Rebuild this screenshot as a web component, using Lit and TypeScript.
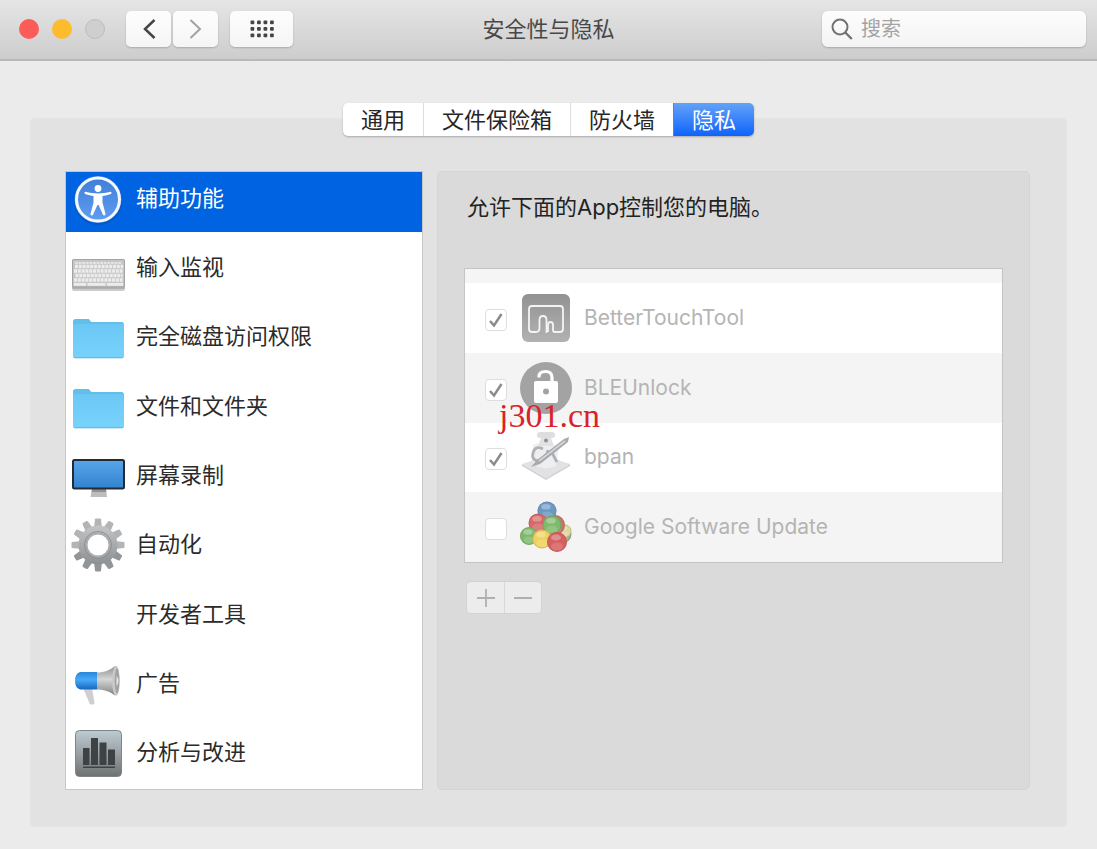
import { LitElement, html, css, svg, nothing } from "lit";
import type { TemplateResult } from "lit";
import { customElement, property, state } from "lit/decorators.js";
import { classMap } from "lit/directives/class-map.js";

const accessibilityIcon = html`<svg class="glyph" viewBox="0 0 56 56" aria-hidden="true">
  <defs>
    <linearGradient id="acc" x1="0" y1="0" x2="0" y2="1">
      <stop offset="0" stop-color="#3f7fd8" /><stop offset="1" stop-color="#5f9df0" />
    </linearGradient>
  </defs>
  <circle cx="28" cy="31" r="24" fill="#0b46a8" opacity=".45" />
  <circle cx="28" cy="29.500" r="23.500" fill="#4c8ae2" />
  <circle cx="28" cy="29.500" r="21.500" fill="url(#acc)" stroke="#f4f8ff" stroke-width="3" />
  <circle cx="28" cy="18.500" r="3.400" fill="#fff" />
  <path d="M15.500 21.800c4 1.300 8 1.700 12.500 1.700s8.500-.4 12.500-1.700c1-.2 1.600 1.600.4 2.100-2.700 1.100-5.600 1.800-8.400 2.200v6.500l3 11.500c.2 1.400-1.900 2-2.500.6L28.600 35h-1.200l-4.400 9.700c-.6 1.400-2.700.8-2.500-.6l3-11.500v-6.500c-2.800-.4-5.700-1.100-8.400-2.200-1.200-.5-.6-2.300.4-2.100z" fill="#fff" />
</svg>`;

const keyboardIcon = html`<svg class="glyph" viewBox="0 0 56 56" aria-hidden="true">
  <rect x="2" y="22" width="53" height="30" rx="2" fill="#9a9a9a" opacity=".5" />
  <rect x="2" y="20" width="53" height="30" rx="2" fill="#b0b0b0" />
  <rect x="2.500" y="20.500" width="52" height="27.500" rx="1.500" fill="#c6c6c6" stroke="#a3a3a3" />
  <g fill="none" stroke="#ececec" stroke-width="3.400" stroke-dasharray="3 .8">
    <path d="M5 27.500h48" /><path d="M4 32h49" /><path d="M5.500 36.500h47" /><path d="M4 41h49" />
  </g>
  <path d="M5 24h47" stroke="#e4e4e4" stroke-width="2" stroke-dasharray="2.800 .8" />
  <path d="M4 45.300h12M17.500 45.300h18M37 45.300h16" stroke="#ececec" stroke-width="2.800" />
</svg>`;

const folderIcon = html`<svg class="glyph" viewBox="0 0 56 56" aria-hidden="true">
  <defs>
    <linearGradient id="fold" x1="0" y1="0" x2="0" y2="1">
      <stop offset="0" stop-color="#6cc7f5" /><stop offset="1" stop-color="#77d3fb" />
    </linearGradient>
  </defs>
  <path d="M3 13.500c0-1.500 1-2.500 2.500-2.500h12c1.500 0 2 .5 2.800 1.700.6 1 1.200 1.300 2.500 1.300h28.700c1.500 0 2.500 1 2.500 2.500V30H3z" fill="#62bfe9" />
  <rect x="3" y="16" width="51" height="34" rx="2" fill="url(#fold)" />
  <path d="M3.500 48.800q.5 1 1.800 1h46.400q1.300 0 1.800-1" stroke="#5bb3dc" fill="none" />
</svg>`;

const monitorIcon = html`<svg class="glyph" viewBox="0 0 56 56" aria-hidden="true">
  <defs>
    <linearGradient id="scr" x1="0" y1="0" x2="0" y2="1">
      <stop offset="0" stop-color="#57a6ea" /><stop offset="1" stop-color="#3382cf" />
    </linearGradient>
  </defs>
  <path d="M22 42h14l1 8H20.500z" fill="#bdbdbd" /><path d="M22 42h14l.3 3H21.600z" fill="#929292" />
  <rect x="3" y="13" width="51" height="28.500" rx="1.500" fill="url(#scr)" stroke="#232c36" stroke-width="2" />
</svg>`;

const gearIcon = html`<svg class="glyph" viewBox="0 0 56 56" aria-hidden="true">
  <defs>
    <linearGradient id="gear" x1="0" y1="0" x2="0" y2="1">
      <stop offset="0" stop-color="#c3c5c7" /><stop offset="1" stop-color="#8d9092" />
    </linearGradient>
    <mask id="gearcut"><rect width="56" height="56" fill="#fff" /><circle cx="28" cy="29" r="10.500" fill="#000" /></mask>
  </defs>
  <g mask="url(#gearcut)">
    <g>
      ${Array.from({ length: 12 }, (_, i) => svg`<path d="M24 12l1-8.700q.2-.8 1-.8h4q.8 0 1 .8l1 8.700z" fill=${i > 3 && i < 9 ? "#929597" : "#b2b4b6"} transform="rotate(${i * 30} 28 29)" />`)}
    </g>
    <circle cx="28" cy="29" r="19.500" fill="url(#gear)" />
    <circle cx="28" cy="29" r="13.500" fill="none" stroke="#8d9092" stroke-width="1" />
    <circle cx="28" cy="29" r="11.500" fill="none" stroke="#a9acae" stroke-width="2" />
  </g>
</svg>`;

const megaphoneIcon = html`<svg class="glyph" viewBox="0 0 56 56" aria-hidden="true">
  <defs>
    <linearGradient id="mb" x1="0" y1="0" x2="0" y2="1">
      <stop offset="0" stop-color="#2b86da" /><stop offset=".45" stop-color="#46aaf8" /><stop offset="1" stop-color="#1567bd" />
    </linearGradient>
    <linearGradient id="mg" x1="0" y1="0" x2="0" y2="1">
      <stop offset="0" stop-color="#8d8d8d" /><stop offset=".45" stop-color="#d6d6d6" /><stop offset="1" stop-color="#808080" />
    </linearGradient>
  </defs>
  <path d="M13 33h9l2.500 14.500c.1 1.200-.6 2-1.800 2h-1.500c-1 0-1.500-.5-1.800-1.500z" fill="#cfcfd1" />
  <path d="M10 17h17v17.500H10q-5-1.500-5-8.700t5-8.800z" fill="url(#mb)" />
  <path d="M27 17.500c8 0 13-2.500 18-6.500v29.500c-5-3.500-10-6-18-6z" fill="url(#mg)" />
  <ellipse cx="46" cy="25.800" rx="3.800" ry="15" fill="#c9c9c9" />
  <ellipse cx="47" cy="25.800" rx="2.300" ry="12.500" fill="#a3a3a3" />
  <path d="M46.500 31q4-5 0-10z" fill="#e6e6e6" />
</svg>`;

const analyticsIcon = html`<svg class="glyph" viewBox="0 0 56 56" aria-hidden="true">
  <defs>
    <linearGradient id="ana" x1="0" y1="0" x2="0" y2="1">
      <stop offset="0" stop-color="#bccbd2" /><stop offset=".5" stop-color="#9aa0a3" /><stop offset="1" stop-color="#6f7171" />
    </linearGradient>
  </defs>
  <rect x="5.500" y="6.500" width="46" height="46" rx="4" fill="url(#ana)" stroke="#7e8588" />
  <g fill="#3d4245">
    <rect x="13" y="24" width="6.500" height="17" /><rect x="21" y="14" width="7" height="27" />
    <rect x="29.500" y="18.500" width="7" height="22.500" /><rect x="38" y="25.500" width="7" height="15.500" />
    <rect x="13" y="42.500" width="32" height="1.500" />
  </g>
</svg>`;

const betterTouchToolIcon = html`<svg class="glyph" viewBox="0 0 54 54" aria-hidden="true">
  <defs>
    <linearGradient id="btt" x1="0" y1="0" x2="0" y2="1">
      <stop offset="0" stop-color="#929292" /><stop offset="1" stop-color="#b2b2b2" />
    </linearGradient>
  </defs>
  <rect x="3" y="3" width="48" height="48" rx="6" fill="url(#btt)" />
  <path d="M13 41q-3 0-3-3V18q0-3 3-3h28q3 0 3 3v20q0 3-3 3h-5q-2 0-2-2v-5q0-3-2.500-3T29 34v7" fill="none" stroke="#f4f4f4" stroke-width="1.800" />
  <path d="M13 41h4q3.500 0 3.500-4v-8q0-4 3.500-4t3.500 4v13" fill="none" stroke="#f4f4f4" stroke-width="1.800" />
</svg>`;

const unlockIcon = html`<svg class="glyph" viewBox="0 0 54 54" aria-hidden="true">
  <circle cx="27" cy="27" r="26" fill="#a3a3a3" />
  <path d="M20 16.500v-1q0-5 6.500-5t6.500 6V22" fill="none" stroke="#fff" stroke-width="3.200" />
  <rect x="15" y="20" width="24" height="22" rx="2" fill="#fff" />
  <circle cx="27" cy="30.500" r="3" fill="#a3a3a3" />
</svg>`;

const scriptIcon = html`<svg class="glyph" viewBox="0 0 54 54" aria-hidden="true">
  <path d="M3 34l24-8 24 8-24 14z" fill="#e2e2e4" /><path d="M3 34l24 14 24-14v2L27 50 3 36z" fill="#d2d2d5" />
  <path d="M14 15q12-5 26 2l-3 19q-12 5-23-1z" fill="#eeeef0" />
  <rect x="18" y="2" width="18" height="6" rx="3" fill="#dededf" />
  <path d="M22 8h10l3 8H19z" fill="#e2e2e5" /><circle cx="27" cy="10.500" r="2" fill="#8f9095" />
  <path d="M24 19q-8-4-10 4t7 8q6-1 8-11M32 21l6 11" fill="none" stroke="#b0b1b5" stroke-width="2.800" />
  <path d="M12 37l6-7L45 9l5-2-1 5-28 22z" fill="#a9aaae" /><path d="M20 31L46 11" stroke="#dedfe3" stroke-width="1.500" />
</svg>`;

const ball = (cx: number, cy: number, r: number, fill: string) => svg`
  <circle cx=${cx} cy=${cy} r=${r} fill=${fill} />
  <circle cx=${cx} cy=${cy} r=${r - 0.5} fill="none" stroke="#333" stroke-opacity=".14" />
  <ellipse cx=${cx} cy=${cy + r * 0.45} rx=${r * 0.6} ry=${r * 0.4} fill="#fff" opacity=".15" />
  <ellipse cx=${cx - 1} cy=${cy - r * 0.45} rx=${r * 0.5} ry=${r * 0.3} fill="#fff" opacity=".3" />`;

const googleIcon = html`<svg class="glyph" viewBox="0 0 54 54" aria-hidden="true">
  ${ball(43, 34, 9.5, "#a3a98a")}${ball(46, 31, 6.5, "#dcd79c")}
  ${ball(36, 25, 10, "#c9736a")}
  ${ball(28, 11, 9.5, "#6d98c4")}
  ${ball(19, 23, 9.5, "#d76868")}${ball(33, 25, 9.5, "#7fb96c")}
  ${ball(10, 36, 9, "#7fb96c")}${ball(23, 39, 9.5, "#f0d15c")}${ball(38, 42, 10, "#d65f5f")}
</svg>`;

interface Category { label: string; icon: TemplateResult | null }
interface AppEntry { name: string; allowed: boolean; icon: TemplateResult }

const tabs = ["通用", "文件保险箱", "防火墙", "隐私"];

const categories: Category[] = [
  { label: "辅助功能", icon: accessibilityIcon },
  { label: "输入监视", icon: keyboardIcon },
  { label: "完全磁盘访问权限", icon: folderIcon },
  { label: "文件和文件夹", icon: folderIcon },
  { label: "屏幕录制", icon: monitorIcon },
  { label: "自动化", icon: gearIcon },
  { label: "开发者工具", icon: null },
  { label: "广告", icon: megaphoneIcon },
  { label: "分析与改进", icon: analyticsIcon },
];

const apps: AppEntry[] = [
  { name: "BetterTouchTool", allowed: true, icon: betterTouchToolIcon },
  { name: "BLEUnlock", allowed: true, icon: unlockIcon },
  { name: "bpan", allowed: true, icon: scriptIcon },
  { name: "Google Software Update", allowed: false, icon: googleIcon },
];

const base = css`
  *, *::before, *::after { box-sizing: border-box; }
  button, input { font: inherit; color: inherit; margin: 0; padding: 0; border: 0; background: none; outline: none; }
  ul { list-style: none; margin: 0; padding: 0; }
  svg { display: block; }
`;

@customElement("window-toolbar")
export class WindowToolbar extends LitElement {
  static styles = [base, css`
    :host { display: block; }
    .bar {
      display: grid; grid-template-columns: 1fr auto 1fr; align-items: center;
      height: 61px; padding: 0 11px 1px;
      background: linear-gradient(#e5e5e5, #cdcdcd);
      border-bottom: 2px solid #b9b9b9;
    }
    .left { display: flex; align-items: center; }
    .lights { display: flex; gap: 13px; margin: 0 21px 0 8px; }
    .light { width: 20px; height: 20px; border-radius: 50%; }
    .close { background: #fc5b57; }
    .minimise { background: #fdbc2e; }
    .zoom { background: #cfcfcf; border: 1px solid #bdbdbd; }
    .tool {
      display: grid; place-items: center; width: 45px; height: 36px;
      background: linear-gradient(#fdfdfd, #f5f5f5); border-radius: 5px;
      box-shadow: 0 1px 2px rgba(0, 0, 0, .2);
    }
    .back { margin-right: 2px; }
    .grid { width: 63px; margin-left: 12px; }
    .title { margin: 0; font-size: 22px; line-height: 32px; font-weight: 400; color: #484848; }
    .search {
      justify-self: end; display: flex; align-items: center; gap: 8px;
      width: 264px; height: 36px; padding: 0 9px;
      background: linear-gradient(#fdfdfd, #f3f3f3); border-radius: 6px;
      box-shadow: 0 1px 2px rgba(0, 0, 0, .2);
    }
    .field { flex: 1; min-width: 0; font-size: 20px; line-height: 28px; color: #333; }
    .field::placeholder { color: #a3a3a3; opacity: 1; }
  `];

  render() {
    return html`<header class="bar">
      <div class="left">
        <div class="lights">
          <button class="light close" aria-label="关闭"></button>
          <button class="light minimise" aria-label="最小化"></button>
          <button class="light zoom" aria-label="缩放" disabled></button>
        </div>
        <button class="tool back" aria-label="后退">
          <svg width="14" height="22" viewBox="0 0 14 22" fill="none" stroke="#454545" stroke-width="2.500"><path d="M12.500 2L3 11l9.500 9" /></svg>
        </button>
        <button class="tool" aria-label="前进" disabled>
          <svg width="14" height="22" viewBox="0 0 14 22" fill="none" stroke="#a2a2a2" stroke-width="2"><path d="M1.500 2L11 11l-9.500 9" /></svg>
        </button>
        <button class="tool grid" aria-label="显示全部">
          <svg width="26" height="20" viewBox="0 0 26 20" fill="#454545">
            ${[0, 1, 2].map((r) => [0, 1, 2, 3].map((c) => svg`<rect x=${1.5 + c * 6.5} y=${1.5 + r * 6.5} width="3.800" height="3.800" rx="1" />`))}
          </svg>
        </button>
      </div>
      <h1 class="title">安全性与隐私</h1>
      <label class="search">
        <svg width="22" height="22" viewBox="0 0 22 22" fill="none" stroke="#717171" stroke-width="2"><circle cx="9" cy="9" r="7.500" /><path d="M14.300 14.500l6.500 6.500" stroke-width="2.400" /></svg>
        <input class="field" type="text" placeholder="搜索" aria-label="搜索" />
      </label>
    </header>`;
  }
}

@customElement("category-list")
export class CategoryList extends LitElement {
  @property({ type: Number }) selected = 0;

  static styles = [base, css`
    :host { display: block; }
    .frame { overflow: hidden; padding-bottom: 2px; background: #fff; border: 1px solid #c6c6c6; }
    .list { display: grid; grid-auto-rows: 1fr; height: 624px; margin-top: -9px; }
    .item {
      display: grid; grid-template-columns: 56px 1fr; align-items: center; gap: 10px;
      width: 100%; height: 100%; padding-left: 4px;
      text-align: left; font-size: 22px; line-height: 32px; color: #2b2b2b;
    }
    .selected { background: #0063e1; color: #fff; }
    .glyph { width: 56px; height: 56px; }
    .name { grid-column: 2; }
  `];

  private pick(index: number) {
    this.selected = index;
  }

  render() {
    return html`<div class="frame"><ul class="list">
      ${categories.map((c, i) => html`<li>
        <button class=${classMap({ item: true, selected: i === this.selected })}
          aria-pressed=${i === this.selected} @click=${() => this.pick(i)}>
          ${c.icon ?? nothing}<span class="name">${c.label}</span>
        </button>
      </li>`)}
    </ul></div>`;
  }
}

@customElement("allowed-apps")
export class AllowedApps extends LitElement {
  static styles = [base, css`
    :host { display: block; }
    .caption { margin: 0 0 45px 3px; font-size: 22px; line-height: 32px; color: #232323; }
    .box { position: relative; padding-top: 14px; background: #f5f5f5; border: 1px solid #c4c4c4; }
    .list { display: grid; grid-auto-rows: 1fr; height: 279px; background: #fff; }
    .row {
      display: grid; grid-template-columns: 22px 54px 1fr; align-items: center;
      height: 100%; padding-left: 20px;
      font-size: 21px; line-height: 32px; color: #b4b4b4;
    }
    .even { background: #f4f4f4; }
    .check { display: grid; margin-top: 4px; }
    .check > * { grid-area: 1 / 1; }
    .tick {
      appearance: none; width: 22px; height: 22px;
      background: #fff; border: 1px solid #dedede; border-radius: 4px;
    }
    .mark { width: 22px; height: 22px; pointer-events: none; }
    .glyph { width: 54px; height: 54px; margin-left: 12px; }
    .name { padding-left: 23px; }
    .stamp {
      position: absolute; left: 34px; top: 127px;
      font-family: "Liberation Serif", serif; font-size: 34px; line-height: 40px; color: #d8232a;
    }
    .actions { display: inline-flex; margin: 19px 0 0 3px; border-radius: 4px; overflow: hidden; box-shadow: 0 0 0 1px #d2d2d2; }
    .action { display: grid; place-items: center; width: 37px; height: 31px; background: #ececec; }
    .action + .action { border-left: 1px solid #d8d8d8; }
  `];

  render() {
    return html`
      <p class="caption">允许下面的App控制您的电脑。</p>
      <div class="box">
        <ul class="list">
          ${apps.map((a, i) => html`<li><label class=${classMap({ row: true, even: i % 2 === 1 })}>
            <span class="check">
              <input class="tick" type="checkbox" .checked=${a.allowed} disabled />
              ${a.allowed ? html`<svg class="mark" viewBox="0 0 22 22" fill="none" stroke="#8b8b8b" stroke-width="2.500" aria-hidden="true"><path d="M5 12l4 4.500L16.500 5" /></svg>` : nothing}
            </span>
            ${a.icon}
            <span class="name">${a.name}</span>
          </label></li>`)}
        </ul>
        <span class="stamp">j301.cn</span>
      </div>
      <div class="actions">
        <button class="action" aria-label="添加" disabled>
          <svg width="20" height="20" viewBox="0 0 20 20" stroke="#b0b0b0" stroke-width="1.800"><path d="M10 1v18M1 10h18" /></svg>
        </button>
        <button class="action" aria-label="移除" disabled>
          <svg width="20" height="20" viewBox="0 0 20 20" stroke="#b0b0b0" stroke-width="1.800"><path d="M1 10h18" /></svg>
        </button>
      </div>`;
  }
}

@customElement("app-root")
export class AppRoot extends LitElement {
  @state() private tab = 3;

  static styles = [base, css`
    :host {
      display: flex; flex-direction: column; min-height: 100vh; background: #ebebeb;
      font-family: Inter, "Noto Sans CJK SC", sans-serif;
    }
    .content { display: flex; flex-direction: column; padding: 42px 30px 22px; }
    .tabs {
      z-index: 1; display: flex; align-self: center; margin-bottom: -18px;
      background: #fff; border-radius: 5px; box-shadow: 0 1px 2px rgba(0, 0, 0, .25);
    }
    .tab { height: 33px; padding: 0 18px; font-size: 22px; line-height: 32px; color: #262626; }
    .tab + .tab { border-left: 1px solid #dedede; }
    .tabs .active {
      color: #fff; background: linear-gradient(#64a2f8, #0f63fb);
      border-color: #3f86f6; border-radius: 0 5px 5px 0;
    }
    .group {
      display: flex; align-items: stretch; gap: 14px; padding: 52px 36px 36px 34px;
      background: #e2e2e2; border: 1px solid #e5e5e5; border-radius: 4px;
    }
    .side { flex: 0 0 358px; }
    .pane {
      flex: 1; min-width: 0; padding: 19px 26px;
      background: #dadada; border: 1px solid #d5d5d5; border-radius: 5px;
    }
  `];

  render() {
    return html`
      <window-toolbar></window-toolbar>
      <main class="content">
        <nav class="tabs" role="tablist">
          ${tabs.map((t, i) => html`<button role="tab" aria-selected=${i === this.tab}
            class=${classMap({ tab: true, active: i === this.tab })} @click=${() => (this.tab = i)}>${t}</button>`)}
        </nav>
        <section class="group">
          <category-list class="side"></category-list>
          <div class="pane"><allowed-apps></allowed-apps></div>
        </section>
      </main>`;
  }
}
